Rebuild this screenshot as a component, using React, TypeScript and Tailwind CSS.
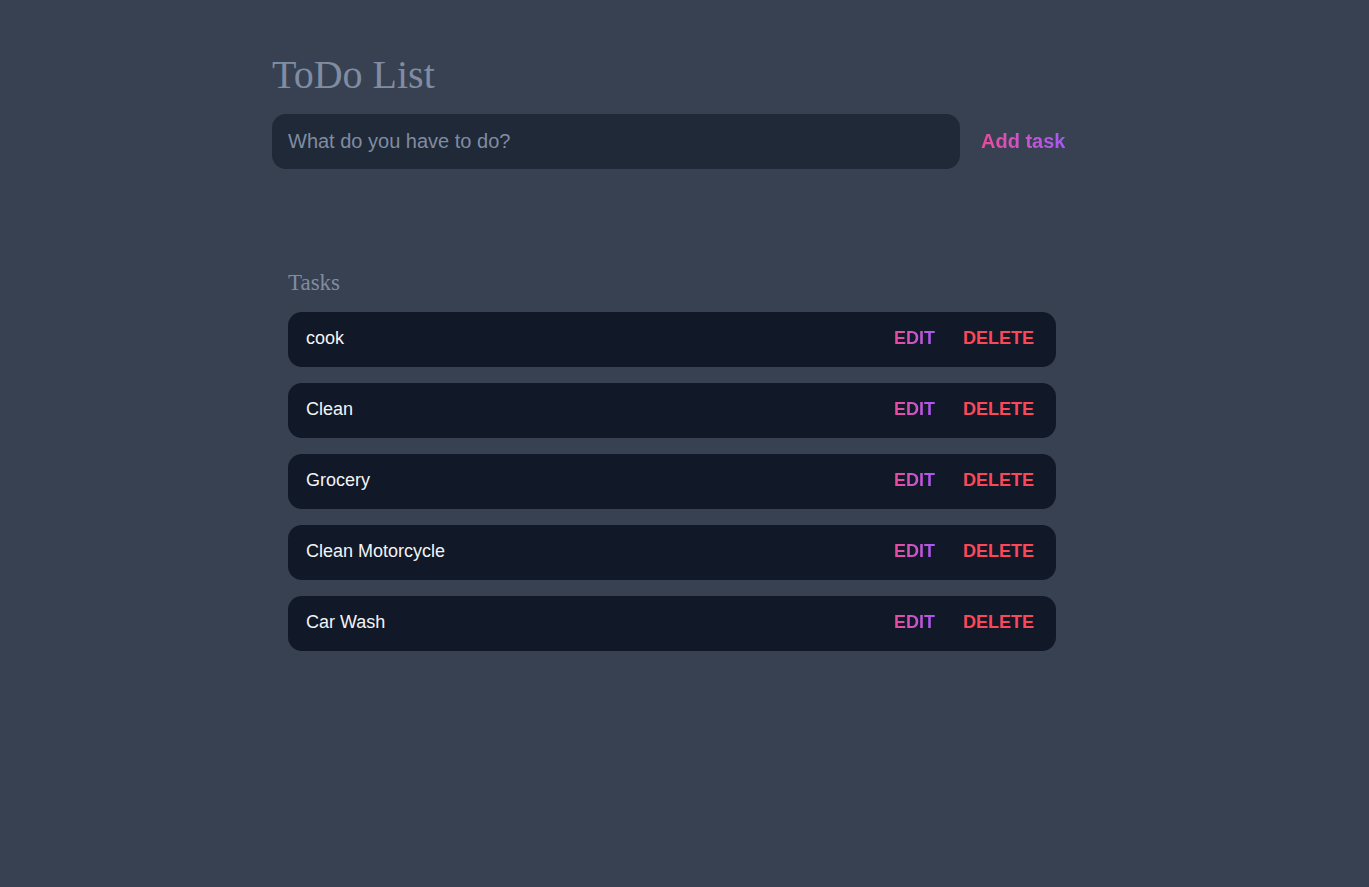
import React from "react";

const tasks = ["cook", "Clean", "Grocery", "Clean Motorcycle", "Car Wash"];

const grad = "bg-gradient-to-r from-[#ec4899] to-[#a855f7] bg-clip-text text-transparent";

export default function App() {
  return (
    <div className="min-h-[887px] w-full bg-[#374151]" style={{ fontFamily: '"Liberation Sans", Arial, sans-serif' }}>
      <div className="ml-[272px] w-[800px] pt-[52px]">
        <h1 className="text-[40px] leading-[46px] text-[#808ca2]" style={{ fontFamily: '"Liberation Serif", "Times New Roman", serif' }}>
          ToDo List
        </h1>
        <div className="mt-[16px] flex items-center">
          <input
            className="h-[55px] w-[688px] rounded-[14px] bg-[#1f2937] px-[16px] text-xl text-[#e5e7eb] outline-none placeholder:text-[#808ca2]"
            placeholder="What do you have to do?"
          />
          <button className={`ml-[21px] -mt-[2px] text-xl font-bold ${grad}`}>Add task</button>
        </div>
        <div className="mt-[99px] w-[768px] ml-[16px]">
          <h2 className="text-[23px] leading-[30px] text-[#808ca2]" style={{ fontFamily: '"Liberation Serif", "Times New Roman", serif' }}>
            Tasks
          </h2>
          <div className="mt-[14px] flex flex-col gap-[16px]">
            {tasks.map((t) => (
              <div key={t} className="flex h-[55px] items-center rounded-[14px] bg-[#111827] pb-[3px] pl-[18px] pr-[22px]">
                <span className="flex-1 text-lg text-[#f3f4f6]">{t}</span>
                <button className={`text-lg font-bold ${grad}`}>EDIT</button>
                <button className="ml-[28px] text-lg font-bold text-[#fb4757]">DELETE</button>
              </div>
            ))}
          </div>
        </div>
      </div>
    </div>
  );
}
